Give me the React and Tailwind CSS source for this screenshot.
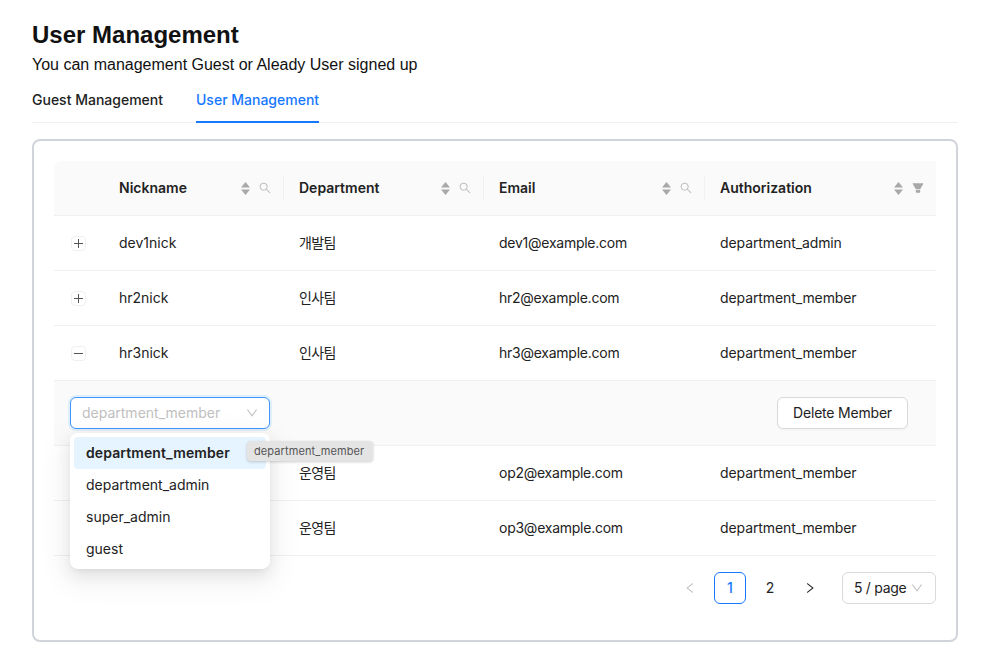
import React from "react";

const sans = "font-['Inter','Noto_Sans_CJK_KR',sans-serif]";

const Icon = ({ d, className }) => (
  <svg viewBox="64 64 896 896" fill="currentColor" className={className}>
    <path d={d} />
  </svg>
);

const paths = {
  search:
    "M909.6 854.5L649.9 594.8C690.2 542.7 712 479 712 412c0-80.2-31.3-155.4-87.9-212.1-56.6-56.7-132-87.9-212.1-87.9s-155.5 31.3-212.1 87.9C143.2 256.5 112 331.8 112 412c0 80.1 31.3 155.5 87.9 212.1C256.5 680.8 331.8 712 412 712c67 0 130.6-21.8 182.7-62l259.7 259.6a8.2 8.2 0 0011.6 0l43.6-43.5a8.2 8.2 0 000-11.6zM570.4 570.4C528 612.7 471.8 636 412 636s-116-23.3-158.4-65.6C211.3 528 188 471.8 188 412s23.3-116.1 65.6-158.4C296 211.3 352.2 188 412 188s116.1 23.2 158.4 65.6S636 352.2 636 412s-23.3 116.1-65.6 158.4z",
  filter:
    "M349 838c0 17.7 14.2 32 31.8 32h262.4c17.6 0 31.8-14.3 31.8-32V642H349v196zm531.1-684H143.9c-24.5 0-39.8 26.7-27.5 48l221.3 376h348.8l221.3-376c12.1-21.3-3.2-48-27.7-48z",
  chevron:
    "M884 256h-75c-5.1 0-9.9 2.5-12.9 6.6L512 654.2 227.9 262.6c-3-4.1-7.8-6.6-12.9-6.6h-75c-6.5 0-10.3 7.4-6.5 12.7l352.6 486.1c12.8 17.6 39 17.6 51.7 0l352.6-486.1c3.9-5.3.1-12.7-6.4-12.7z",
  left: "M724 218.3V141c0-6.7-7.7-10.4-12.9-6.3L260.3 486.8a31.86 31.86 0 000 50.3l450.8 352.1c5.3 4.1 12.9.4 12.9-6.3v-77.3c0-4.9-2.3-9.6-6.1-12.6l-360-281 360-281.1c3.8-3 6.1-7.7 6.1-12.6z",
  right:
    "M765.7 486.8L314.9 134.7A7.97 7.97 0 00302 141v77.3c0 4.9 2.3 9.6 6.1 12.6l360 281.1-360 281.1c-3.9 3-6.1 7.7-6.1 12.6V883c0 6.7 7.7 10.4 12.9 6.3l450.8-352.1a31.96 31.96 0 000-50.4z",
};

const columns = [
  { title: "Nickname", icon: "search" },
  { title: "Department", icon: "search" },
  { title: "Email", icon: "search" },
  { title: "Authorization", icon: "filter" },
];

const users = [
  ["dev1nick", "개발팀", "dev1@example.com", "department_admin"],
  ["hr2nick", "인사팀", "hr2@example.com", "department_member"],
  ["hr3nick", "인사팀", "hr3@example.com", "department_member", true],
  ["op2nick", "운영팀", "op2@example.com", "department_member"],
  ["op3nick", "운영팀", "op3@example.com", "department_member"],
];

const options = ["department_member", "department_admin", "super_admin", "guest"];

const SortIcon = () => (
  <svg viewBox="0 0 9 13" fill="currentColor" className="w-[9px] h-[13px] text-[#a8a8a8]">
    <polygon points="4.5,0 9,5.5 0,5.5" />
    <polygon points="0,7.5 9,7.5 4.5,13" />
  </svg>
);

const ExpandButton = ({ open }) => (
  <button className="relative block ml-[17px] w-[15px] h-[15px] rounded border border-[#f0f0f0] bg-white">
    <span className="absolute left-[2px] right-[2px] top-[6px] h-px bg-[#555]" />
    {!open && <span className="absolute top-[2px] bottom-[2px] left-[6px] w-px bg-[#555]" />}
  </button>
);

const HeaderCell = ({ col, last }) => (
  <th className="pl-4 p-0 text-left font-semibold border-b border-[#f0f0f0]">
    <div className={`flex items-center justify-between h-[22px] ${last ? "pr-3" : "pr-3 -mr-px border-r border-[#f0f0f0]"}`}>
      <span className="pb-[2px]">{col.title}</span>
      <span className="flex items-center gap-[9px]">
        <SortIcon />
        <Icon d={paths[col.icon]} className={`w-3 h-3 ${col.icon === "filter" ? "text-[#a8a8a8]" : "text-[#bfbfbf]"}`} />
      </span>
    </div>
  </th>
);

const RoleSelect = () => (
  <div className="relative w-[200px]">
    <div className="flex items-center justify-between h-8 px-[11px] rounded-md border border-[#4096ff] bg-white shadow-[0_0_0_2px_rgba(5,145,255,0.1)] text-[#bfbfbf]">
      <span className="pb-[2px]">department_member</span>
      <Icon d={paths.chevron} className="w-3 h-3" />
    </div>
    <div className="absolute z-10 top-9 left-0 w-full p-1 rounded-lg bg-white shadow-[0_6px_16px_0_rgba(0,0,0,0.08),0_3px_6px_-4px_rgba(0,0,0,0.12),0_9px_28px_8px_rgba(0,0,0,0.05)] text-[#222]">
      {options.map((o, i) => (
        <div key={o} className={`flex items-center h-8 px-3 pb-[2px] rounded ${i === 0 ? "bg-[#e6f4ff] font-semibold tracking-[0.1px]" : ""}`}>
          {o}
        </div>
      ))}
    </div>
    <div className="absolute z-20 top-11 left-[177px] flex items-center h-5 w-[126px] pl-[7px] rounded-sm bg-[#e4e4e4] shadow-[0_1px_3px_rgba(0,0,0,0.2)] text-[11px] tracking-[0.1px] text-[#555] whitespace-nowrap">
      department_member
    </div>
  </div>
);

const PageBtn = ({ children, active }) => (
  <button
    className={`flex items-center justify-center w-8 h-8 rounded-md ${active ? "border border-[#1677ff] text-[#1677ff] font-medium" : "text-[#222]"}`}
  >
    {children}
  </button>
);

export default function App() {
  return (
    <div className={`w-[984px] h-[659px] overflow-hidden bg-white pl-8 pr-[26px] pt-[19px] text-[14px] text-[#222] ${sans}`}>
      <h1 className="font-['Liberation_Sans',sans-serif] font-bold text-2xl leading-8 text-[#111]">User Management</h1>
      <p className="font-['Liberation_Sans',sans-serif] text-base leading-6 mt-[2px] text-[#111]">
        You can management Guest or Aleady User signed up
      </p>

      <div className="flex gap-[33px] h-[44px] mt-[2px] border-b border-[#f0f0f0] font-medium">
        <div className="flex items-center h-[44px] pb-px text-[#222] border-b-2 border-transparent">Guest Management</div>
        <div className="flex items-center h-[44px] pb-px text-[#1677ff] border-b-2 border-[#1677ff]">User Management</div>
      </div>

      <div className="mt-4 h-[503px] rounded-lg border-2 border-[#d1d5db] px-5 pt-5">
        <table className="w-full table-fixed border-separate border-spacing-0">
          <colgroup>
            <col className="w-[49px]" />
            <col className="w-[180px]" />
            <col className="w-[200px]" />
            <col className="w-[221px]" />
            <col />
          </colgroup>
          <thead className="bg-[#fafafa]">
            <tr className="h-[55px]">
              <th className="p-0 rounded-tl-lg border-b border-[#f0f0f0]" />
              {columns.map((c, i) => (
                <HeaderCell key={c.title} col={c} last={i === columns.length - 1} />
              ))}
            </tr>
          </thead>
          <tbody>
            {users.map(([nick, dept, email, role, open]) => (
              <React.Fragment key={nick}>
                <tr className="h-[55px]">
                  <td className="p-0 border-b border-[#f0f0f0]">
                    <ExpandButton open={open} />
                  </td>
                  <td className="p-0 pl-4 pb-[2px] border-b border-[#f0f0f0]">{nick}</td>
                  <td className="p-0 pl-4 pb-[2px] border-b border-[#f0f0f0] tracking-[-0.6px]">{dept}</td>
                  <td className="p-0 pl-4 pb-[2px] border-b border-[#f0f0f0] tracking-[-0.25px]">{email}</td>
                  <td className="p-0 pl-4 pb-[2px] border-b border-[#f0f0f0] tracking-[-0.1px]">{role}</td>
                </tr>
                {open && (
                  <tr className="h-[65px]">
                    <td colSpan={5} className="p-0 bg-[#fafafa] border-b border-[#f0f0f0]">
                      <div className="flex items-center justify-between pl-4 pr-7">
                        <RoleSelect />
                        <button className="h-8 w-[131px] pb-[2px] rounded-md border border-[#d9d9d9] bg-white tracking-[-0.2px] shadow-[0_2px_0_rgba(0,0,0,0.02)]">
                          Delete Member
                        </button>
                      </div>
                    </td>
                  </tr>
                )}
              </React.Fragment>
            ))}
          </tbody>
        </table>

        <div className="flex items-center justify-end gap-2 mt-4">
          <PageBtn>
            <Icon d={paths.left} className="w-3 h-3 text-[#bfbfbf]" />
          </PageBtn>
          <PageBtn active>
            <span className="pb-[2px]">1</span>
          </PageBtn>
          <PageBtn>
            <span className="pb-[2px]">2</span>
          </PageBtn>
          <PageBtn>
            <Icon d={paths.right} className="w-3 h-3 text-[#222]" />
          </PageBtn>
          <div className="flex items-center justify-between w-[94px] h-8 ml-2 pl-[11px] pr-3 rounded-md border border-[#d9d9d9] tracking-[-0.3px]">
            <span className="pb-[2px]">5 / page</span>
            <Icon d={paths.chevron} className="w-3 h-3 text-[#bfbfbf]" />
          </div>
        </div>
      </div>
    </div>
  );
}
